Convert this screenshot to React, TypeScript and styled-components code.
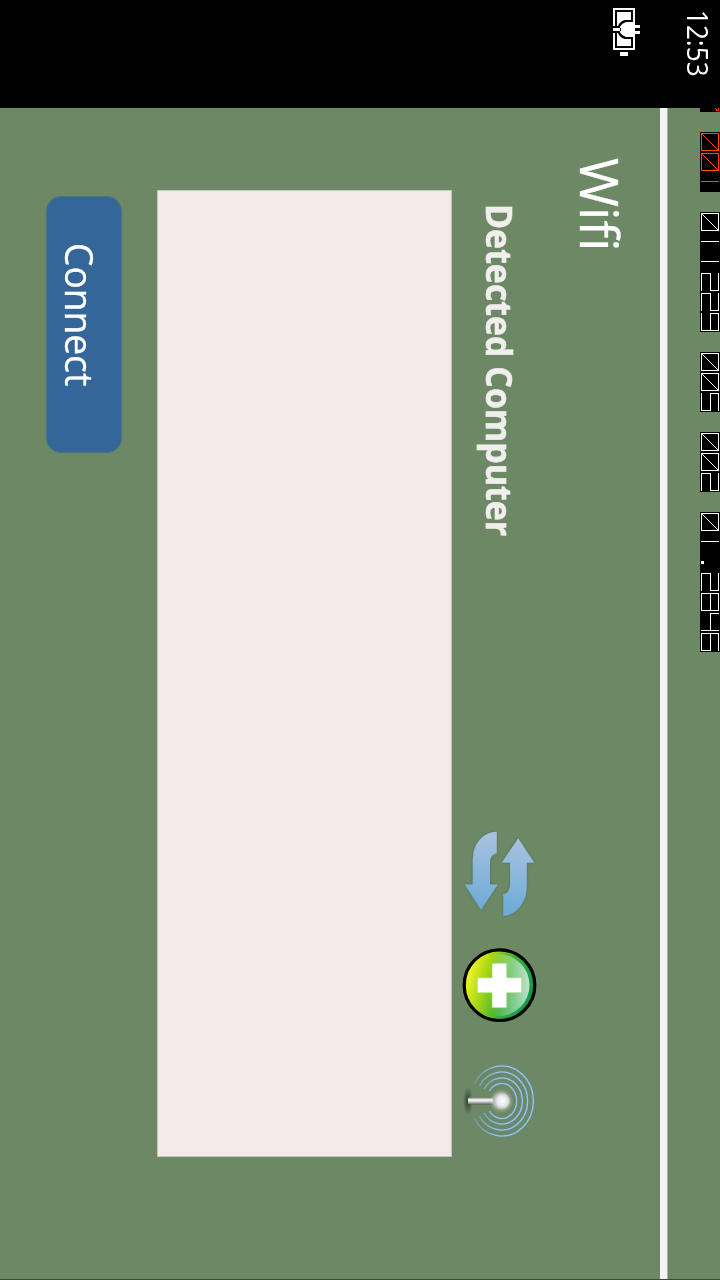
import React from "react";
import styled, { createGlobalStyle } from "styled-components";

const GlobalStyle = createGlobalStyle`
  html, body { margin: 0; padding: 0; background: #000; overflow: hidden; }
  * { box-sizing: border-box; }
`;

const Viewport = styled.div`
  width: 720px;
  height: 1280px;
  overflow: hidden;
`;

/* The phone is held sideways: a landscape screen turned a quarter clockwise. */
const Screen = styled.main`
  display: flex;
  width: 1280px;
  height: 720px;
  transform-origin: 0 0;
  transform: translateX(720px) rotate(90deg);
  background: #6c8864;
  color: #fff;
  font-family: "Open Sans", "Noto Sans", sans-serif;
`;

const StatusStrip = styled.aside`
  flex: 0 0 108px;
  display: flex;
  flex-direction: column;
  align-items: flex-start;
  background: #000;
`;

const Label = styled.span<{ $size: number; $line: number; $stretch?: number; $weight?: number; $color?: string; $stroke?: number }>`
  display: block;
  white-space: pre;
  font-size: ${(p) => p.$size}px;
  line-height: ${(p) => p.$line}px;
  font-weight: ${(p) => p.$weight ?? 400};
  color: ${(p) => p.$color ?? "#fff"};
  -webkit-text-stroke: ${(p) => p.$stroke ?? 0}px currentColor;
  transform-origin: 0 50%;
  transform: scaleX(${(p) => p.$stretch ?? 1});
`;

const Clock = styled.div`
  height: 80px;
  padding: 2px 0 0 10px;
`;

const BatterySlot = styled.div`
  padding-left: 8px;
  svg { display: block; }
`;

const Page = styled.section`
  flex: 1;
  display: flex;
  flex-direction: column;
  min-width: 0;
  border-right: 1px solid #3d4a3a;
`;

const CounterBar = styled.div`
  display: flex;
  gap: 20px;
  height: 52px;
`;

const Group = styled.div<{ $color: string }>`
  display: flex;
  height: 20px;
  background: #000;
  color: ${(p) => p.$color};
`;

const ClippedCell = styled.div`
  width: 4px;
  height: 20px;
  background: #000;
  svg { display: block; }
`;

const Cell = styled.div`
  width: 20px;
  height: 20px;
  padding: 1px;
`;

const Segments = styled.div<{ $slash: boolean }>`
  width: 18px;
  height: 18px;
  background: ${(p) =>
    p.$slash
      ? "linear-gradient(to bottom right, transparent calc(50% - 0.6px), currentColor calc(50% - 0.5px), currentColor calc(50% + 0.5px), transparent calc(50% + 0.6px))"
      : "none"};
`;

const Half = styled.div<{ $on: string }>`
  height: 9px;
  border: 0 solid currentColor;
  border-top-width: ${(p) => (p.$on.includes("t") ? 1 : 0)}px;
  border-right-width: ${(p) => (p.$on.includes("r") ? 1 : 0)}px;
  border-bottom-width: ${(p) => (p.$on.includes("b") ? 1 : 0)}px;
  border-left-width: ${(p) => (p.$on.includes("l") ? 1 : 0)}px;
`;

const Stem = styled.div`
  width: 1px;
  height: 18px;
  margin-left: 8px;
  background: currentColor;
`;

const Point = styled.div`
  width: 3px;
  height: 18px;
  margin-left: 8px;
  border-bottom: 3px solid currentColor;
`;

const Rule = styled.div`
  height: 8px;
  background: #f4f4f4;
  border-top: 1px solid #a6b1a1;
`;

const Title = styled.h1`
  margin: 0;
  height: 125px;
  padding: 23.5px 0 0 50px;
`;

const DetectedRow = styled.div`
  display: flex;
  height: 83px;
  padding-left: 96px;
`;

const Heading = styled.h2`
  margin: 0;
  width: 614px;
  padding-top: 11px;
`;

const Actions = styled.div`
  display: flex;
  svg { display: block; overflow: visible; }
`;

const ComputerList = styled.div`
  width: 967px;
  height: 295px;
  margin-left: 82px;
  background: #f4eae9;
  border: 1px solid #c3c6ba;
`;

const ConnectButton = styled.button`
  display: flex;
  width: 257px;
  height: 76px;
  margin: 35px 0 0 88px;
  padding: 14px 0 0 45.5px;
  border: 1px solid #4a7287;
  border-radius: 15px;
  background: #346699;
  font-family: inherit;
`;

const HALVES: Record<string, [string, string]> = {
  "0": ["tlr", "blr"],
  "2": ["trb", "bl"],
  "4": ["lrb", "r"],
  "5": ["tlb", "rb"],
  "6": ["tlb", "lrb"],
  "8": ["tlrb", "lrb"],
  "9": ["tlrb", "rb"],
};

function Digit({ value }: { value: string }) {
  if (value === "1") return <Cell><Stem /></Cell>;
  if (value === ".") return <Cell><Point /></Cell>;
  const [upper, lower] = HALVES[value];
  return (
    <Cell>
      <Segments $slash={value === "0"}>
        <Half $on={upper} />
        <Half $on={lower} />
      </Segments>
    </Cell>
  );
}

function Counter({ value, color = "#fff" }: { value: string; color?: string }) {
  return (
    <Group $color={color} role="img" aria-label={value}>
      {value.split("").map((c, i) => <Digit key={i} value={c} />)}
    </Group>
  );
}

function BatteryIcon() {
  return (
    <svg width="48" height="27" viewBox="0 0 48 27">
      <path fill="#fff" d="M0 5h42v22H0z" />
      <path fill="#000" d="M2 7h38v18H2z" />
      <path fill="#fff" d="M4 9h34v14H4z" />
      <path fill="#fff" d="M44 12h4v8h-4z" />
      <path fill="#000" d="M12 7v8q1 5 6 7v5h7v-5q5-2 6-7V7z" />
      <path fill="#fff" d="M14 5v9q1 4 4.500 6h6q3.500-2 4.500-6V5zM20 19h3v8h-3zM17 0h3v6h-3zM23 0h3v6h-3z" />
    </svg>
  );
}

function RefreshIcon() {
  return (
    <svg width="116" height="83" viewBox="0 0 116 83">
      <defs>
        <linearGradient id="blue" gradientUnits="userSpaceOnUse" x1="14" y1="30" x2="96" y2="44"><stop offset="0" stopColor="#abc4df" /><stop offset="1" stopColor="#6ba9d8" /></linearGradient>
        <filter id="edge" x="-10%" y="-10%" width="120%" height="120%"><feDropShadow dx="0" dy="0" stdDeviation="1.2" floodColor="#3c5a55" floodOpacity=".7" /></filter>
      </defs>
      <g fill="url(#blue)" filter="url(#edge)">
        <path d="M13.700 38.300H35.300C36 42 39.500 45 43.700 45H66.500V37.300L92 54L66.500 70.300V62.300H42C26 62 14.500 53 13.700 38.300Z" />
        <path d="M20.300 16.700L44.700 .7V8.300H68.700C84 8.500 97 18 98 31.700H76C76 28 72 25 67 25H44.700V33.300Z" />
      </g>
    </svg>
  );
}

function AddIcon() {
  return (
    <svg width="116" height="83" viewBox="0 0 116 83">
      <defs>
        <linearGradient id="green" x1=".35" y1="1" x2=".65" y2="0"><stop offset="0" stopColor="#fbfb2a" /><stop offset=".28" stopColor="#a9d715" /><stop offset=".6" stopColor="#3aae36" /><stop offset="1" stopColor="#079a50" /></linearGradient>
        <linearGradient id="gloss" x1="0" y1="0" x2="0" y2="1"><stop offset="0" stopColor="#fff" stopOpacity=".72" /><stop offset=".6" stopColor="#fff" stopOpacity="0" /></linearGradient>
      </defs>
      <circle cx="51.2" cy="35.5" r="35.3" fill="url(#green)" stroke="#000" strokeWidth="3.2" />
      <circle cx="51.2" cy="36.5" r="31" fill="url(#gloss)" />
      <path fill="#fff" stroke="#a5d67b" strokeWidth=".6" d="M43.700 13.300h15v15h15v14.700h-15v14.700h-15V43H29.300V28.300h14.400z" />
    </svg>
  );
}

function AntennaIcon() {
  return (
    <svg width="104" height="83" viewBox="0 0 104 83">
      <defs>
        <radialGradient id="ball" cx=".5" cy=".45"><stop offset="0" stopColor="#fff" /><stop offset=".6" stopColor="#e6e9ea" /><stop offset="1" stopColor="#b0b8b0" /></radialGradient>
        <linearGradient id="rod"><stop offset="0" stopColor="#858585" /><stop offset=".35" stopColor="#fff" /><stop offset=".65" stopColor="#c6c4c6" /><stop offset="1" stopColor="#58585b" /></linearGradient>
        <radialGradient id="shade"><stop offset="0" stopColor="#1d271b" stopOpacity=".75" /><stop offset="1" stopColor="#1d271b" stopOpacity="0" /></radialGradient>
        <linearGradient id="wave" gradientUnits="userSpaceOnUse" x1="0" y1="2" x2="0" y2="62"><stop offset="0" stopColor="#9cc8f2" /><stop offset=".6" stopColor="#9cc4e6" /><stop offset="1" stopColor="#9cc4e6" stopOpacity=".3" /></linearGradient>
        <radialGradient id="halo"><stop offset=".5" stopColor="#dde5dd" stopOpacity=".6" /><stop offset="1" stopColor="#dde5dd" stopOpacity="0" /></radialGradient>
      </defs>
      <ellipse cx="51" cy="67" rx="14" ry="5" fill="url(#shade)" />
      <g fill="none" stroke="url(#wave)" strokeWidth="1.3" style={{ filter: "drop-shadow(0 0 1px #5488ae)" }}>
        <path d="M41 45.600A17.500 15 0 1 1 61 45.600" />
        <path d="M39 50.900A23 20.700 0 1 1 63 50.900" />
        <path d="M36 55.600A29 26 0 1 1 66 55.600" />
        <path d="M34 61A35 31.700 0 1 1 68 61" />
      </g>
      <path fill="url(#rod)" d="M47.500 42h7v25h-7z" />
      <circle cx="51" cy="33.600" r="12" fill="url(#halo)" />
      <circle cx="51" cy="33.600" r="8.500" fill="url(#ball)" />
    </svg>
  );
}

export default function App() {
  return (
    <>
      <GlobalStyle />
      <Viewport>
        <Screen>
          <StatusStrip>
            <Clock><Label $size={29} $line={40} $stretch={0.9}>12:53</Label></Clock>
            <BatterySlot><BatteryIcon /></BatterySlot>
          </StatusStrip>
          <Page>
            <CounterBar>
              <ClippedCell>
                <svg width="4" height="20" viewBox="0 0 4 20" shapeRendering="crispEdges">
                  <path fill="#ff4a00" d="M0 1h3v1H0zM2 2h1v2H2zM1 3h1v1H1zM0 4h1v1H0z" />
                </svg>
              </ClippedCell>
              <Counter value="001" color="#ff4a00" />
              <Counter value="011229" />
              <Counter value="005" />
              <Counter value="002" />
              <Counter value="01.2846" />
            </CounterBar>
            <Rule />
            <Title><Label $size={53} $line={72} $stroke={0.3}>Wifi</Label></Title>
            <DetectedRow>
              <Heading><Label $size={36} $line={50} $weight={700} $stretch={0.942} $stroke={0.6} $color="#f1eeee">Detected Computer</Label></Heading>
              <Actions><RefreshIcon /><AddIcon /><AntennaIcon /></Actions>
            </DetectedRow>
            <ComputerList />
            <ConnectButton type="button"><Label $size={39} $line={54} $stretch={0.952} $stroke={0.3}>Connect</Label></ConnectButton>
          </Page>
        </Screen>
      </Viewport>
    </>
  );
}
